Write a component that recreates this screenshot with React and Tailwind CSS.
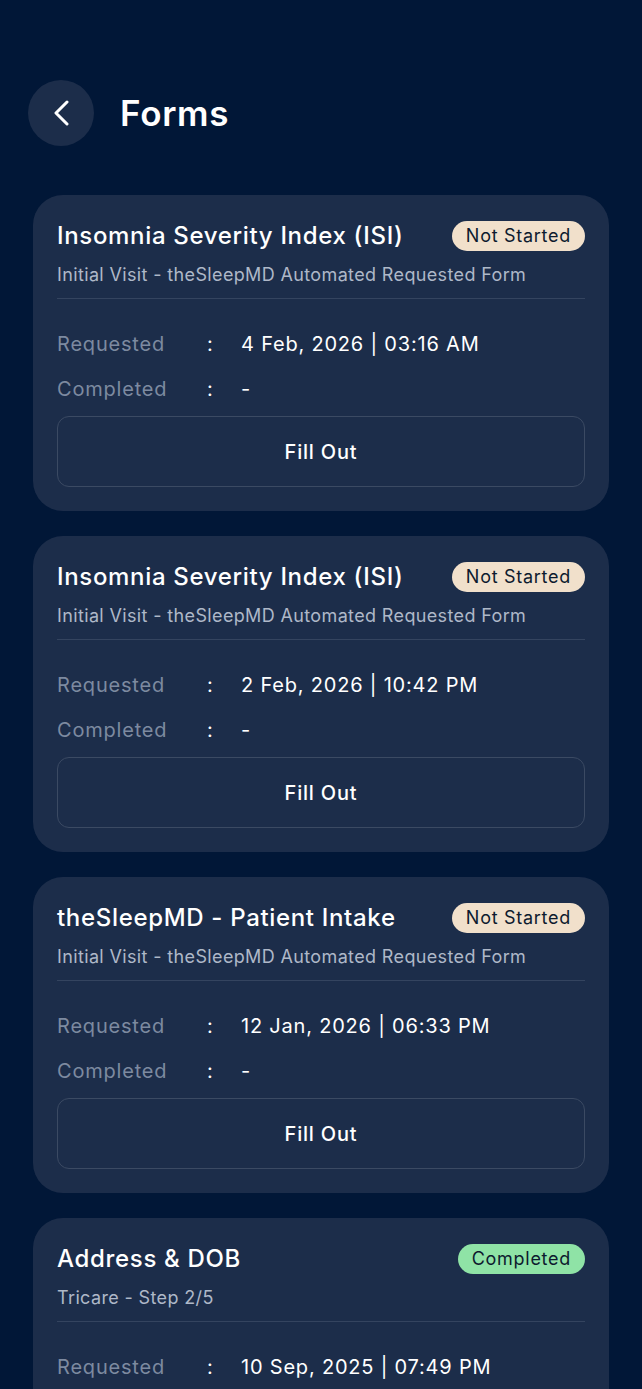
const forms = [
  {
    title: "Insomnia Severity Index (ISI)",
    subtitle: "Initial Visit - theSleepMD Automated Requested Form",
    status: "Not Started",
    requested: "4 Feb, 2026 | 03:16 AM",
    completed: "-",
  },
  {
    title: "Insomnia Severity Index (ISI)",
    subtitle: "Initial Visit - theSleepMD Automated Requested Form",
    status: "Not Started",
    requested: "2 Feb, 2026 | 10:42 PM",
    completed: "-",
  },
  {
    title: "theSleepMD - Patient Intake",
    subtitle: "Initial Visit - theSleepMD Automated Requested Form",
    status: "Not Started",
    requested: "12 Jan, 2026 | 06:33 PM",
    completed: "-",
  },
  {
    title: "Address & DOB",
    subtitle: "Tricare - Step 2/5",
    status: "Completed",
    requested: "10 Sep, 2025 | 07:49 PM",
    completed: "10 Sep, 2025 | 07:52 PM",
  },
];

function FormCard({ form }) {
  const done = form.status === "Completed";
  return (
    <div className="rounded-[30px] bg-[#1c2d4a] px-6 pt-[25px] pb-[24px]">
      <div className="flex items-center justify-between">
        <h2 className="text-[24px] leading-[32px] font-medium tracking-[0.028em] text-white">
          {form.title}
        </h2>
        <span
          className={
            done
              ? "rounded-full bg-[#8fe3a6] px-[14px] py-[3px] text-[18px] leading-[24px] tracking-[0.04em] text-[#0d1a2e]"
              : "rounded-full bg-[#f1e0cb] px-[14px] py-[3px] text-[18px] leading-[24px] tracking-[0.04em] text-[#0d1a2e]"
          }
        >
          {form.status}
        </span>
      </div>
      <p className="mt-[10px] text-[18px] leading-[26px] tracking-[0.02em] text-[#aeb8c8]">
        {form.subtitle}
      </p>
      <div className="mt-[10px] h-px bg-[#34445f]" />
      <div className="mt-[31px] flex items-center text-[20px] leading-[28px] tracking-[0.04em]">
        <span className="w-[150px] text-[#7d8aa0]">Requested</span>
        <span className="w-[34px] text-white">:</span>
        <span className="text-white">{form.requested}</span>
      </div>
      <div className="mt-[17px] flex items-center text-[20px] leading-[28px] tracking-[0.04em]">
        <span className="w-[150px] text-[#7d8aa0]">Completed</span>
        <span className="w-[34px] text-white">:</span>
        <span className="text-white">{form.completed}</span>
      </div>
      {!done && (
        <button className="mt-[13px] flex h-[71px] w-full items-center justify-center rounded-[12px] border border-[#3b4a63] text-[20px] font-medium tracking-[0.04em] text-white">
          Fill Out
        </button>
      )}
    </div>
  );
}

export default function App() {
  return (
    <div
      className="min-h-screen bg-[#011737] pb-10"
      style={{ fontFamily: "Inter, 'Noto Sans', sans-serif" }}
    >
      <div className="flex items-center gap-[26px] px-[28px] pt-[80px]">
        <button className="flex h-[66px] w-[66px] items-center justify-center rounded-full bg-[#1c2d4a] text-white">
          <svg width="16" height="26" viewBox="0 0 16 26" fill="none">
            <polyline
              points="14,2 3,13 14,24"
              stroke="currentColor"
              strokeWidth="3"
              strokeLinecap="round"
              strokeLinejoin="round"
            />
          </svg>
        </button>
        <h1 className="text-[35px] font-semibold tracking-[0.02em] text-white">Forms</h1>
      </div>
      <div className="mt-[49px] flex flex-col gap-[25px] px-[33px]">
        {forms.map((form, i) => (
          <FormCard key={i} form={form} />
        ))}
      </div>
    </div>
  );
}
